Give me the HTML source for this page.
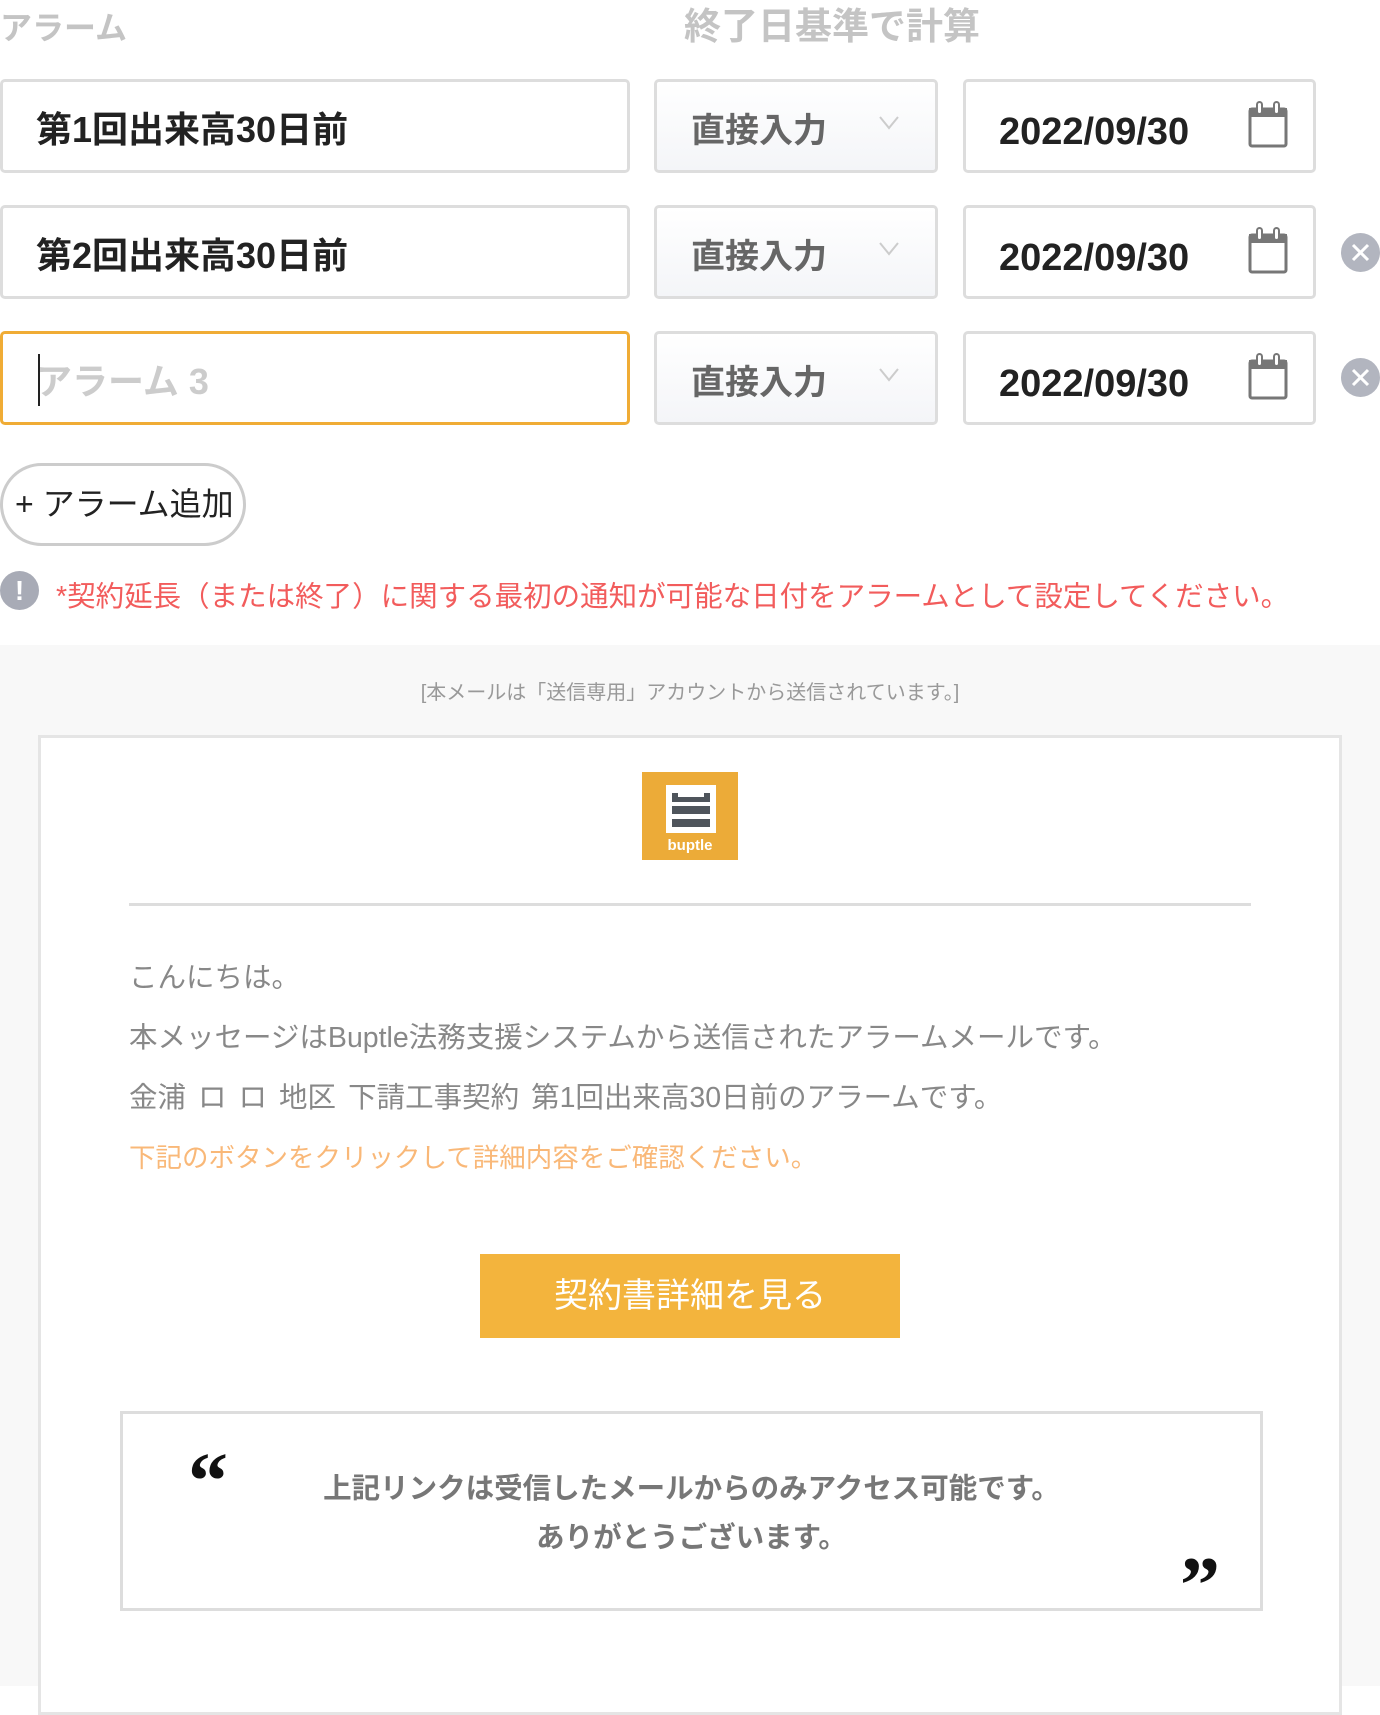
<!DOCTYPE html>
<html><head><meta charset="utf-8"><style>
*{box-sizing:border-box;margin:0;padding:0}
body{width:1380px;height:1686px;background:#fff;font-family:"Liberation Sans","Noto Sans CJK JP",sans-serif;position:relative;overflow:hidden}
.a{position:absolute;white-space:nowrap}
.h{font-weight:bold;color:#c4c4c4;font-size:33px;line-height:40px}
.inp{position:absolute;left:0;width:630px;height:94px;border:3px solid #ddd;border-radius:5px;background:#fff;font-weight:bold;font-size:36px;color:#222;padding-left:33px;line-height:96px}
.sel{position:absolute;left:654px;width:284px;height:94px;border:3px solid #ddd;border-radius:5px;background:linear-gradient(#fff,#f4f5f8);font-weight:bold;font-size:34px;color:#666;padding-left:34px;line-height:98px}
.sel svg{position:absolute;left:222px;top:34px}
.dt{position:absolute;left:963px;width:353px;height:94px;border:3px solid #ddd;border-radius:5px;background:#fff;font-weight:bold;font-size:38px;color:#222;padding-left:33px;line-height:100px}
.dt svg{position:absolute;left:282px;top:18px}
.x{position:absolute;left:1341px;width:39px;height:39px;border-radius:50%;background:#b2b5bf}
.x svg{position:absolute;left:0;top:0}
.body{font-size:28.5px;color:#888;left:129px;line-height:40px}
.g{margin-left:12px}
</style></head><body>
<div class="a h" style="left:0;top:8px;font-size:32px">アラーム</div>
<div class="a h" style="left:684px;top:7px;font-size:37px">終了日基準で計算</div>

<div class="inp" style="top:79px">第1回出来高30日前</div>
<div class="inp" style="top:205px">第2回出来高30日前</div>
<div class="inp" style="top:331px;border-color:#f0ac35;color:#ccc;line-height:96px"><span style="position:absolute;left:35px;top:20px;width:2px;height:52px;background:#222"></span>アラーム 3</div>

<div class="sel" style="top:79px">直接入力<svg width="20" height="14"><path d="M1 1L10 12L19 1" fill="none" stroke="#ccc" stroke-width="2"/></svg></div>
<div class="sel" style="top:205px">直接入力<svg width="20" height="14"><path d="M1 1L10 12L19 1" fill="none" stroke="#ccc" stroke-width="2"/></svg></div>
<div class="sel" style="top:331px">直接入力<svg width="20" height="14"><path d="M1 1L10 12L19 1" fill="none" stroke="#ccc" stroke-width="2"/></svg></div>

<div class="dt" style="top:79px">2022/09/30<svg width="40" height="48"><rect x="2" y="9" width="36" height="37" rx="2" fill="#fff" stroke="#777" stroke-width="3"/><rect x="1" y="8" width="38" height="9" fill="#777"/><rect x="9" y="2" width="5" height="12" rx="2.5" fill="#fff" stroke="#777" stroke-width="2"/><rect x="26" y="2" width="5" height="12" rx="2.5" fill="#fff" stroke="#777" stroke-width="2"/></svg></div>
<div class="dt" style="top:205px">2022/09/30<svg width="40" height="48"><rect x="2" y="9" width="36" height="37" rx="2" fill="#fff" stroke="#777" stroke-width="3"/><rect x="1" y="8" width="38" height="9" fill="#777"/><rect x="9" y="2" width="5" height="12" rx="2.5" fill="#fff" stroke="#777" stroke-width="2"/><rect x="26" y="2" width="5" height="12" rx="2.5" fill="#fff" stroke="#777" stroke-width="2"/></svg></div>
<div class="dt" style="top:331px">2022/09/30<svg width="40" height="48"><rect x="2" y="9" width="36" height="37" rx="2" fill="#fff" stroke="#777" stroke-width="3"/><rect x="1" y="8" width="38" height="9" fill="#777"/><rect x="9" y="2" width="5" height="12" rx="2.5" fill="#fff" stroke="#777" stroke-width="2"/><rect x="26" y="2" width="5" height="12" rx="2.5" fill="#fff" stroke="#777" stroke-width="2"/></svg></div>

<div class="x" style="top:233px"><svg width="39" height="39"><path d="M12 12L27 27M27 12L12 27" stroke="#fff" stroke-width="3"/></svg></div>
<div class="x" style="top:358px"><svg width="39" height="39"><path d="M12 12L27 27M27 12L12 27" stroke="#fff" stroke-width="3"/></svg></div>

<div class="a" style="left:0;top:463px;width:246px;height:83px;border:3px solid #ccc;border-radius:42px;font-size:32px;color:#222;line-height:77px;padding-left:12px">+ アラーム追加</div>

<div class="a" style="left:0;top:571px;width:39px;height:39px;border-radius:50%;background:#a8abb6;color:#fff;font-weight:bold;font-size:28px;text-align:center;line-height:39px">!</div>
<div class="a" style="left:56px;top:577px;font-size:28.5px;color:#f25c5c;line-height:40px">*契約延長（または終了）に関する最初の通知が可能な日付をアラームとして設定してください。</div>

<div class="a" style="left:0;top:645px;width:1380px;height:1041px;background:#f8f8f8"></div>
<div class="a" style="left:0;width:1380px;text-align:center;top:680px;font-size:20px;color:#999;line-height:26px">[本メールは「送信専用」アカウントから送信されています。]</div>

<div class="a" style="left:38px;top:735px;width:1304px;height:980px;background:#fff;border:3px solid #e5e5e5"></div>
<div class="a" style="left:642px;top:772px;width:96px;height:88px;background:#ecab38">
  <div class="a" style="left:24px;top:13px;width:50px;height:48px;background:#fff"></div>
  <div class="a" style="left:30px;top:21px;width:38px;height:9px;background:#4f555c"></div>
  <div class="a" style="left:36px;top:19px;width:26px;height:6px;background:#fff"></div>
  <div class="a" style="left:30px;top:34px;width:38px;height:8px;background:#4f555c"></div>
  <div class="a" style="left:30px;top:47px;width:38px;height:8px;background:#4f555c"></div>
  <div class="a" style="left:0;width:96px;text-align:center;top:65px;color:#fff;font-weight:bold;font-size:15px;line-height:18px">buptle</div>
</div>
<div class="a" style="left:129px;top:903px;width:1122px;height:3px;background:#ddd"></div>

<div class="a body" style="top:958px">こんにちは。</div>
<div class="a body" style="top:1018px">本メッセージはBuptle法務支援システムから送信されたアラームメールです。</div>
<div class="a body" style="top:1078px">金浦<span class="g">ロ</span><span class="g">ロ</span><span class="g">地区</span><span class="g">下請工事契約</span><span class="g">第1回出来高30日前のアラームです。</span></div>
<div class="a body" style="top:1138px;color:#f9b878;font-size:26.5px">下記のボタンをクリックして詳細内容をご確認ください。</div>

<div class="a" style="left:480px;top:1254px;width:420px;height:84px;background:#f3b43d;color:#fff;font-size:34px;text-align:center;line-height:84px">契約書詳細を見る</div>

<div class="a" style="left:120px;top:1411px;width:1143px;height:200px;border:3px solid #ddd;background:#fff"></div>
<div class="a" style="left:188px;top:1442px;font-family:'Liberation Serif',serif;font-weight:bold;font-size:80px;line-height:80px;color:#111">“</div>
<div class="a" style="left:1180px;top:1546px;font-family:'Liberation Serif',serif;font-weight:bold;font-size:80px;line-height:80px;color:#111">”</div>
<div class="a" style="left:120px;width:1143px;text-align:center;top:1465px;font-weight:bold;font-size:28.5px;color:#777;line-height:49px">上記リンクは受信したメールからのみアクセス可能です。<br>ありがとうございます。</div>
</body></html>
